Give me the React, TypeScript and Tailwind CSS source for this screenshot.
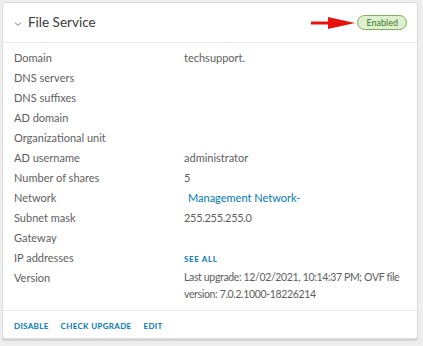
import React from "react";

const rows: { label: string; value?: React.ReactNode }[] = [
  { label: "Domain", value: "techsupport." },
  { label: "DNS servers" },
  { label: "DNS suffixes" },
  { label: "AD domain" },
  { label: "Organizational unit" },
  { label: "AD username", value: "administrator" },
  { label: "Number of shares", value: "5" },
  {
    label: "Network",
    value: <span className="pl-1 text-[#0079b8]">Management Network-</span>,
  },
  { label: "Subnet mask", value: <span className="tracking-[-0.3px]">255.255.255.0</span> },
  { label: "Gateway" },
  {
    label: "IP addresses",
    value: (
      <span className="text-[8px] font-bold tracking-[0.08em] text-[#0079b8]">
        SEE ALL
      </span>
    ),
  },
];

function App() {
  return (
    <div
      className="w-[423px] h-[346px] bg-[#eeeeee] pl-[2px] pt-[2px]"
      style={{ fontFamily: "Lato, 'Open Sans', sans-serif" }}
    >
      <div className="w-[416px] h-[337px] bg-white border border-[#dcdcdc] rounded-[3px] shadow-[0_2px_0_#d6d6d6] flex flex-col overflow-hidden">
        <div className="h-[40px] shrink-0 flex items-center justify-between border-b border-[#e8e8e8] pl-[11px] pr-[10px]">
          <div className="flex items-center gap-[6px]">
            <svg width="8" height="6" viewBox="0 0 8 6" className="mt-[2px]">
              <path d="M1 1.5 L4 4.5 L7 1.5" fill="none" stroke="#777" strokeWidth="1" />
            </svg>
            <span className="text-[13.5px] text-[#3a3a3a]">File Service</span>
          </div>
          <div className="flex items-center gap-[1px]">
            <svg width="46" height="12" viewBox="0 0 46 12">
              <path d="M1 4.5 H22 V7.5 H1 Z" fill="#e8120c" />
              <path d="M18 0 L45 6 L18 12 Z" fill="#e8120c" />
            </svg>
            <span className="h-[15px] px-[8px] flex items-center rounded-full bg-[#dff0d0] border border-[#7fb05a] text-[9px] text-[#3c7a1d]">
              Enabled
            </span>
          </div>
        </div>
        <div className="flex-1 pt-[5px] pl-[11px] pr-[11px] text-[11px] text-[#5e5e5e]">
          {rows.map((r) => (
            <div key={r.label} className="flex h-[20px] items-center">
              <div className="w-[170px] shrink-0">{r.label}</div>
              <div className="whitespace-nowrap">{r.value}</div>
            </div>
          ))}
          <div className="flex">
            <div className="w-[170px] shrink-0 leading-[17px] pt-[1px]">Version</div>
            <div className="leading-[17px] pt-[1px] whitespace-nowrap text-[10.5px] tracking-[-0.35px]">
              Last upgrade: 12/02/2021, 10:14:37 PM; OVF file
              <br />
              version: 7.0.2.1000-18226214
            </div>
          </div>
        </div>
        <div className="h-[28px] shrink-0 border-t border-[#e8e8e8] flex items-center pt-[3px] gap-[12px] pl-[11px] text-[8px] font-bold tracking-[0.04em] text-[#0079b8]">
          <span>DISABLE</span>
          <span>CHECK UPGRADE</span>
          <span>EDIT</span>
        </div>
      </div>
    </div>
  );
}

export default App;
